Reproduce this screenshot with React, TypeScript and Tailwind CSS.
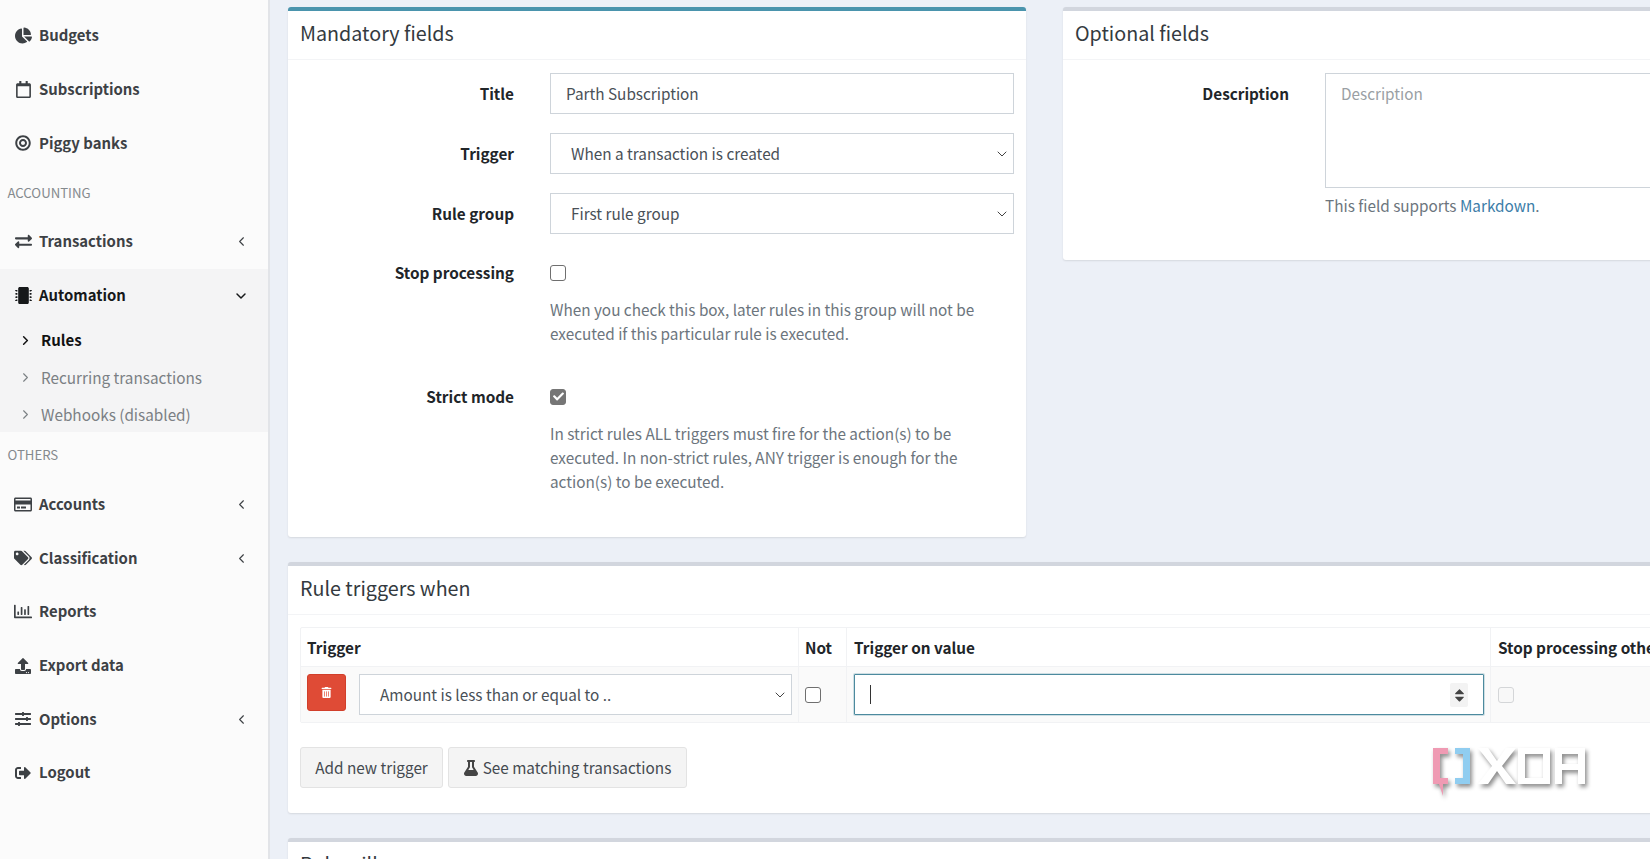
import React from "react";
import {
  FaChartPie, FaRegCalendar, FaBullseye, FaExchangeAlt, FaMicrochip, FaRegCreditCard, FaTags,
  FaRegChartBar, FaUpload, FaSlidersH, FaSignOutAlt, FaTrashAlt, FaFlask, FaCheck, FaCaretUp, FaCaretDown,
} from "react-icons/fa";
import { ChevronLeft, ChevronDown, ChevronRight } from "lucide-react";

const font = "[font-family:'Noto_Sans_CJK_SC','Source_Sans_Pro',sans-serif]";

function NavItem({ icon, label, chevron, active }: { icon: React.ReactNode; label: string; chevron?: "left" | "down"; active?: boolean }) {
  return (
    <div className={`h-[53.7px] flex items-center pl-[14px] pr-[19px] text-[14.9px] font-bold ${active ? "text-[#16181a]" : "text-[#3d4145]"}`}>
      <span className="w-[18px] h-[18px] flex items-center justify-center mr-[7px]">{icon}</span>
      <span className="flex-1 -mt-[1px]">{label}</span>
      {chevron === "left" && <ChevronLeft size={15} strokeWidth={1.8} />}
      {chevron === "down" && <ChevronDown size={16} strokeWidth={2.2} />}
    </div>
  );
}

function SubItem({ label, active }: { label: string; active?: boolean }) {
  return (
    <div className={`h-[37px] flex items-center pl-[18px] ${active ? "text-[15px] font-bold text-[#111]" : "text-[15.3px] text-[#7b8084]"}`}>
      <ChevronRight size={15} strokeWidth={active ? 2.4 : 1.8} className="mr-[8px]" />
      <span className="-mt-[1px]">{label}</span>
    </div>
  );
}

function Header({ label, h }: { label: string; h: string }) {
  return <div className={`${h} flex items-center pl-[7.5px] text-[13.2px] text-[#858a8e]`}>{label}</div>;
}

function Sidebar() {
  return (
    <aside className="w-[270px] shrink-0 h-full bg-[#fbfbfb] border-r-2 border-[#e2e4e8] pt-[9px] overflow-hidden">
      <NavItem icon={<FaChartPie size={17} />} label="Budgets" />
      <NavItem icon={<FaRegCalendar size={17} />} label="Subscriptions" />
      <NavItem icon={<FaBullseye size={16} />} label="Piggy banks" />
      <Header label="ACCOUNTING" h="h-[45px]" />
      <NavItem icon={<FaExchangeAlt size={17} />} label="Transactions" chevron="left" />
      <div className="bg-[#f4f4f5] h-[163px]">
        <NavItem icon={<FaMicrochip size={17} />} label="Automation" chevron="down" active />
        <SubItem label="Rules" active />
        <SubItem label="Recurring transactions" />
        <SubItem label="Webhooks (disabled)" />
      </div>
      <Header label="OTHERS" h="h-[46px]" />
      <NavItem icon={<FaRegCreditCard size={19} />} label="Accounts" chevron="left" />
      <NavItem icon={<FaTags size={18} />} label="Classification" chevron="left" />
      <NavItem icon={<FaRegChartBar size={19} />} label="Reports" />
      <NavItem icon={<FaUpload size={16} />} label="Export data" />
      <NavItem icon={<FaSlidersH size={16} />} label="Options" chevron="left" />
      <NavItem icon={<FaSignOutAlt size={16} />} label="Logout" />
    </aside>
  );
}

function Card({ title, top, children, className }: { title: string; top: string; children?: React.ReactNode; className?: string }) {
  return (
    <section className={`bg-white border-t-4 ${top} rounded-[3px] shadow-[0_1px_2px_rgba(0,0,0,0.1)] ${className ?? ""}`}>
      <div className="h-[49px] border-b border-[#f3f4f6] px-[12px] pb-[5px] flex items-center text-[19.7px] text-[#343a40]">{title}</div>
      {children}
    </section>
  );
}

function FieldBox({ children, className }: { children: React.ReactNode; className?: string }) {
  return (
    <div className={`h-[41px] border border-[#ced4da] bg-white flex items-center text-[15.3px] text-[#495057] ${className ?? ""}`}>
      {children}
    </div>
  );
}

function Select({ label, pad = "pl-[20px]" }: { label: string; pad?: string }) {
  return (
    <FieldBox className={`${pad} pr-[3px] justify-between`}>
      <span>{label}</span>
      <ChevronDown size={16} strokeWidth={1.5} className="text-[#444]" />
    </FieldBox>
  );
}

function Label({ children }: { children: React.ReactNode }) {
  return <div className="w-[200px] shrink-0 text-right text-[15.3px] font-bold text-[#212529]">{children}</div>;
}

function Box({ checked, disabled }: { checked?: boolean; disabled?: boolean }) {
  return (
    <span
      className={`w-[16px] h-[16px] rounded-[3px] border flex items-center justify-center ${
        checked ? "bg-[#767676] border-[#767676]" : disabled ? "border-[#d4d6d8] bg-[#f8f8f8]" : "border-[#6f6f6f] bg-white"
      }`}
    >
      {checked && <FaCheck size={11} className="text-white" />}
    </span>
  );
}

function Mandatory() {
  return (
    <Card title="Mandatory fields" top="border-[#4a94ad]" className="w-[738px] h-[530px] shrink-0">
      <div className="pt-[13px] pl-[26px] pr-[12px] text-[15.3px]">
        <div className="flex items-center">
          <Label>Title</Label>
          <div className="flex-1 ml-[36px]">
            <FieldBox className="px-[15px]">Parth Subscription</FieldBox>
          </div>
        </div>
        <div className="flex items-center mt-[19px]">
          <Label>Trigger</Label>
          <div className="flex-1 ml-[36px]"><Select label="When a transaction is created" /></div>
        </div>
        <div className="flex items-center mt-[19px]">
          <Label>Rule group</Label>
          <div className="flex-1 ml-[36px]"><Select label="First rule group" /></div>
        </div>
        <div className="flex mt-[27px]">
          <Label>Stop processing</Label>
          <div className="flex-1 ml-[36px]">
            <div className="h-[24px] flex items-center"><Box /></div>
            <p className="mt-[12px] text-[#6c757d] leading-[24.2px]">
              When you check this box, later rules in this group will not be<br />executed if this particular rule is executed.
            </p>
          </div>
        </div>
        <div className="flex mt-[39.5px]">
          <Label>Strict mode</Label>
          <div className="flex-1 ml-[36px]">
            <div className="h-[24px] flex items-center"><Box checked /></div>
            <p className="mt-[12px] text-[#6c757d] leading-[24.2px]">
              In strict rules ALL triggers must fire for the action(s) to be<br />executed. In non-strict rules, ANY trigger is enough for the<br />action(s) to be executed.
            </p>
          </div>
        </div>
      </div>
    </Card>
  );
}

function Optional() {
  return (
    <Card title="Optional fields" top="border-[#d2d6de]" className="w-[738px] h-[253px] shrink-0">
      <div className="pt-[13px] pl-[26px] pr-[12px] flex text-[15.3px]">
        <div className="w-[200px] shrink-0 text-right font-bold text-[#212529] pt-[9px]">Description</div>
        <div className="flex-1 ml-[36px]">
          <div className="h-[115px] border border-[#ced4da] px-[15px] pt-[8px] text-[#9a9fa4]">Description</div>
          <p className="mt-[6px] text-[#6c757d]">
            This field supports <span className="text-[#3c7da8]">Markdown</span>.
          </p>
        </div>
      </div>
    </Card>
  );
}

function XdaLogo() {
  return (
    <svg width="160" height="52" viewBox="0 0 160 52" className="absolute right-[59px] top-[746px]" style={{ filter: "drop-shadow(2px 3px 2px rgba(0,0,0,0.45))" }}>
      <path d="M2 2h15v6H9v24h8v6h-5v12l-4-12H2z" fill="#ef9ab3" />
      <path d="M24 2h15v36H24v-6h8V8h-8z" fill="#90cdf0" />
      <path d="M47 2h10l9 13 9-13h10L71 20l14 18H75L66 25l-9 13H47l14-18z" fill="#fff" />
      <path d="M87 2h32v36H87zM94 8v24h18V8z" fill="#fff" fillRule="evenodd" />
      <path d="M124 2h30v36h-7V24h-16v14h-7zM131 8v10h16V8z" fill="#fff" fillRule="evenodd" />
    </svg>
  );
}

function Triggers() {
  return (
    <Card title="Rule triggers when" top="border-[#d2d6de]" className="mt-[25px] h-[251px]">
      <div className="px-[12px] pt-[12px]">
        <div className="w-[1600px] border border-[#f1f2f4] rounded-[2px]">
          <div className="flex h-[38px] items-center font-bold text-[15.3px] text-[#212529]">
            <div className="w-[498px] pl-[6px] h-full flex items-center border-r border-[#f1f2f4]">Trigger</div>
            <div className="w-[48px] pl-[6px] h-full flex items-center border-r border-[#f1f2f4]">Not</div>
            <div className="w-[644px] pl-[7px] h-full flex items-center border-r border-[#f1f2f4]">Trigger on value</div>
            <div className="pl-[7px] whitespace-nowrap">Stop processing other triggers</div>
          </div>
          <div className="flex h-[56px] bg-[#fafafa] border-t border-[#f1f2f4]">
            <div className="w-[498px] pl-[6px] pr-[6px] pt-[7px] flex border-r border-[#f1f2f4]">
              <div className="w-[39px] h-[37px] rounded-[3px] bg-[#df4b36] border border-[#d13f2b] flex items-center justify-center shrink-0">
                <FaTrashAlt size={11} className="text-white" />
              </div>
              <div className="flex-1 ml-[13px]"><Select label="Amount is less than or equal to .." /></div>
            </div>
            <div className="w-[48px] pl-[6px] flex items-center border-r border-[#f1f2f4]"><Box /></div>
            <div className="w-[644px] pl-[7px] pr-[6px] pt-[7px] border-r border-[#f1f2f4]">
              <div className="h-[41px] border border-[#4c8a9e] rounded-[1px] bg-white flex items-center pl-[15px] pr-[15px] justify-between shadow-[0_0_0_1px_rgba(76,138,158,0.25)]">
                <span className="w-px h-[19px] bg-[#333]" />
                <span className="flex flex-col items-center bg-[#f3f3f3] rounded-[2px] w-[18px] h-[24px] justify-center text-[#444]">
                  <FaCaretUp size={15} className="-mb-[4px]" />
                  <FaCaretDown size={15} className="-mt-[4px]" />
                </span>
              </div>
            </div>
            <div className="pl-[7px] flex items-center"><Box disabled /></div>
          </div>
        </div>
        <div className="flex mt-[24px] gap-[4.5px] text-[15.3px] text-[#444a50]">
          <div className="w-[143px] h-[41px] bg-[#f4f4f4] border border-[#e3e3e3] rounded-[3px] flex items-center justify-center">Add new trigger</div>
          <div className="w-[239px] h-[41px] bg-[#f4f4f4] border border-[#e3e3e3] rounded-[3px] flex items-center justify-center gap-[4px]">
            <FaFlask size={16} className="text-[#444]" />
            <span>See matching transactions</span>
          </div>
        </div>
      </div>
    </Card>
  );
}

export default function App() {
  return (
    <div className={`relative w-[1650px] h-[859px] overflow-hidden flex bg-[#ecf0f7] ${font}`}>
      <Sidebar />
      <main className="flex-1 min-w-0 pl-[18px] pt-[7px] overflow-hidden">
        <div className="w-[1513px]">
          <div className="flex gap-[37px]">
            <Mandatory />
            <Optional />
          </div>
          <Triggers />
          <Card title="Rule will" top="border-[#d2d6de]" className="mt-[25px] h-[60px]" />
        </div>
      </main>
      <XdaLogo />
    </div>
  );
}
